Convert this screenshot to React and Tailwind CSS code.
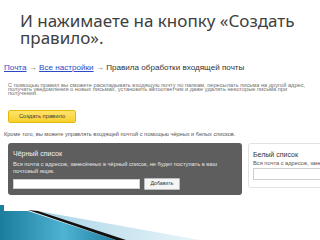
export default function App() {
    const sans = { fontFamily: '"Liberation Sans", Arial, sans-serif' };

    return (
        <div className="w-[320px] h-[240px] overflow-hidden bg-white flex flex-col">
            <h1
                className="pl-[20px] pt-[12px] text-[17px] leading-[17px] text-[#404040] font-normal whitespace-nowrap shrink-0"
                style={{ fontFamily: '"Noto Sans", sans-serif' }}
            >
                И нажимаете на кнопку «Создать
                <br />
                правило».
            </h1>

            <div style={sans} className="flex flex-col shrink-0">
                <div className="pl-[4px] mt-[17px] text-[8.1px] leading-[10px] text-[#333] whitespace-nowrap">
                    <span className="text-[#2a4bc4] underline">Почта</span>
                    <span className="text-[#666]"> → </span>
                    <span className="text-[#2a4bc4] underline">Все настройки</span>
                    <span className="text-[#666]"> → </span>
                    Правила обработки входящей почты
                </div>

                <p className="pl-[8px] mt-[10px] text-[5.7px] leading-[4.2px] text-[#707070] whitespace-nowrap">
                    С помощью правил вы сможете раскладывать входящую почту по папкам, пересылать письма на другой адрес,
                    <br />
                    получать уведомления о новых письмах, установить автоответчик и даже удалять некоторые письма при
                    <br />
                    получении.
                </p>

                <div className="ml-[8px] mt-[14px] w-[68px] h-[13px] rounded-[2px] border border-[#e3b90c] bg-gradient-to-b from-[#ffe46a] to-[#f8cf2a] flex items-center justify-center text-[5.8px] text-[#3a3a3a]">
                    Создать правило
                </div>

                <p className="pl-[4px] mt-[8px] text-[5.6px] leading-[6px] text-[#555] whitespace-nowrap">
                    Кроме того, вы можете управлять входящей почтой с помощью чёрных и белых списков.
                </p>

                <div className="flex gap-[6px] mt-[6px] pl-[8px]">
                    <div className="w-[234px] h-[52px] shrink-0 rounded-[3px] bg-[#5e5e5e] px-[5px] pt-[7px] flex flex-col">
                        <div className="text-[7px] leading-[8px] text-[#f2f2f2]">Чёрный список</div>
                        <div className="mt-[3px] text-[5.7px] leading-[7px] text-[#e6e6e6] whitespace-nowrap">
                            Вся почта с адресов, занесённых в чёрный список, не будет поступать в ваш
                            <br />
                            почтовый ящик.
                        </div>
                        <div className="flex items-center gap-[4px] mt-[3px]">
                            <div className="w-[127px] h-[10px] bg-white border border-[#cfcfcf]" />
                            <div className="w-[36px] h-[12px] bg-[#f5f5f5] border border-[#bdbdbd] rounded-[1px] flex items-center justify-center text-[5.2px] text-[#333]">
                                Добавить
                            </div>
                        </div>
                    </div>

                    <div className="w-[120px] h-[45px] shrink-0 rounded-[3px] border border-[#e2e2e2] bg-white px-[4px] pt-[7px] flex flex-col">
                        <div className="text-[7px] leading-[8px] text-[#333]">Белый список</div>
                        <div className="mt-[1px] text-[5.7px] leading-[7px] text-[#555] whitespace-nowrap">
                            Вся почта с адресов, занесённых в белый список
                        </div>
                        <div className="mt-[1px] w-[110px] h-[12px] bg-white border border-[#cfcfcf]" />
                    </div>
                </div>
            </div>

            <svg className="mt-[10px] shrink-0" width="200" height="35" viewBox="0 205 200 35">
                <defs>
                    <linearGradient id="teal" x1="0" y1="0" x2="1" y2="0">
                        <stop offset="0" stopColor="#1b7c9c" />
                        <stop offset="0.55" stopColor="#4fb3d2" />
                        <stop offset="1" stopColor="#1f7fa0" />
                    </linearGradient>
                    <linearGradient id="pale" x1="0" y1="0" x2="1" y2="0">
                        <stop offset="0" stopColor="#a9d4e6" />
                        <stop offset="1" stopColor="#eaf5fa" />
                    </linearGradient>
                </defs>
                <rect x="0" y="205" width="4" height="10" fill="#1d7f9f" />
                <polygon points="38,211 200,240 124,240" fill="url(#pale)" />
                <polygon points="0,211 28,211 116,240 0,240" fill="url(#teal)" />
                <polygon points="28,210 38,211 126,240 116,240" fill="#111" />
            </svg>
        </div>
    );
}
